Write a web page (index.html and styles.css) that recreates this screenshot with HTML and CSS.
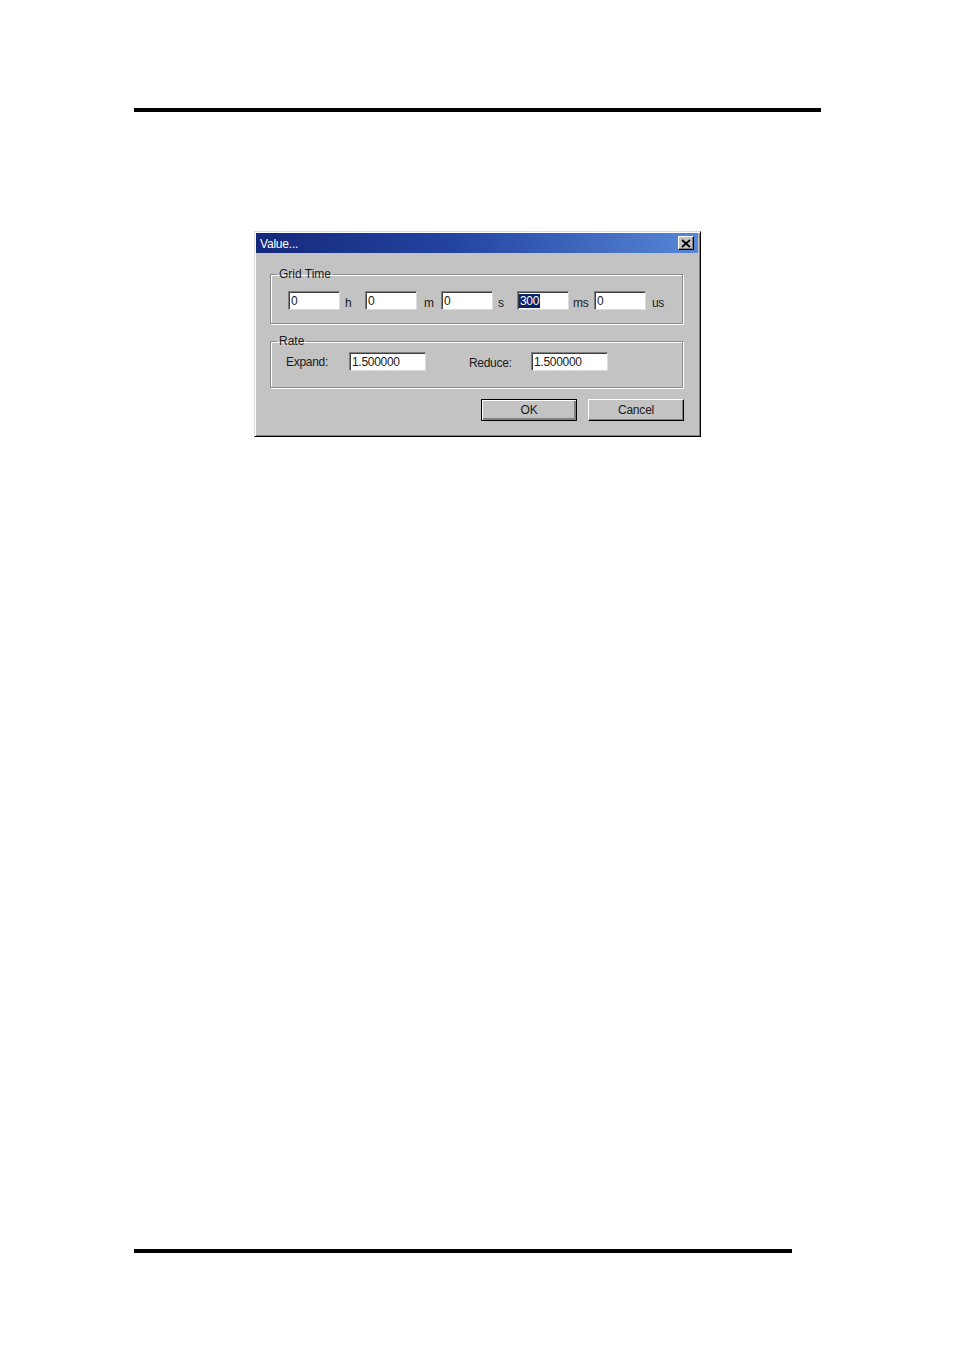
FILE: index.html
```html
<!DOCTYPE html>
<html>
<head>
<meta charset="utf-8">
<link rel="stylesheet" href="styles.css">
</head>
<body>
<div class="page">
  <div class="rule rule-top"></div>
  <div class="dialog">
    <div class="titlebar">
      <span class="title">Value...</span>
      <span class="close"><svg width="10" height="9" viewBox="0 0 10 9"><path d="M1 1 L9 8 M9 1 L1 8" stroke="#000" stroke-width="1.8" fill="none"/></svg></span>
    </div>
    <div class="body">
      <fieldset class="group group-time">
        <legend>Grid Time</legend>
        <div class="row">
          <span class="field w52"><span class="val">0</span></span><span class="unit u-h">h</span>
          <span class="field w52"><span class="val">0</span></span><span class="unit u-m">m</span>
          <span class="field w52"><span class="val">0</span></span><span class="unit u-s">s</span>
          <span class="field w52"><span class="val sel">300</span></span><span class="unit u-ms">ms</span>
          <span class="field w52"><span class="val">0</span></span><span class="unit u-us">us</span>
        </div>
      </fieldset>
      <fieldset class="group group-rate">
        <legend>Rate</legend>
        <div class="row rate-row">
          <span class="lbl lbl-expand">Expand:</span>
          <span class="field w76"><span class="val">1.500000</span></span>
          <span class="lbl lbl-reduce">Reduce:</span>
          <span class="field w76"><span class="val">1.500000</span></span>
        </div>
      </fieldset>
      <div class="buttons">
        <span class="btn btn-default"><span class="btn-in">OK</span></span>
        <span class="btn"><span class="btn-in">Cancel</span></span>
      </div>
    </div>
  </div>
  <div class="spacer"></div>
  <div class="rule rule-bottom"></div>
</div>
</body>
</html>
```
FILE: styles.css
```css
html, body {
  margin: 0;
  padding: 0;
  background: #fff;
}
body {
  font-family: "Liberation Sans", Arial, sans-serif;
  font-size: 12px;
  color: #1a1a1a;
}
.page {
  width: 954px;
  height: 1350px;
  display: flex;
  flex-direction: column;
}
.rule {
  background: #000;
  height: 4px;
  margin-left: 134px;
}
.rule-top {
  margin-top: 108px;
  width: 687px;
}
.rule-bottom {
  width: 658px;
}
.spacer {
  height: 812px;
}
.dialog {
  margin-top: 119px;
  margin-left: 254px;
  width: 447px;
  height: 206px;
  box-sizing: border-box;
  background: #c3c3c3;
  border-top: 1px solid #dcdcdc;
  border-left: 1px solid #dcdcdc;
  border-right: 1px solid #000;
  border-bottom: 1px solid #000;
  box-shadow: inset 1px 1px 0 #fff, inset -1px -1px 0 #808080;
  padding: 1px 2px 2px 1px;
  display: flex;
  flex-direction: column;
}
.titlebar {
  height: 20px;
  background: linear-gradient(to right, #14287a 0%, #2444a2 45%, #5787d6 100%);
  display: flex;
  align-items: center;
  justify-content: space-between;
  padding: 0 4px 0 4px;
}
.title {
  color: #fff;
  font-size: 12px;
  letter-spacing: -0.2px;
  padding-top: 1px;
}
.close {
  width: 16px;
  height: 14px;
  box-sizing: border-box;
  background: #c3c3c3;
  border-top: 1px solid #fff;
  border-left: 1px solid #fff;
  border-right: 1px solid #000;
  border-bottom: 1px solid #000;
  box-shadow: inset -1px -1px 0 #808080;
  display: flex;
  align-items: center;
  justify-content: center;
}
.close svg { display: block; }
.body {
  flex: 1;
  padding: 14px 16px 0 14px;
  display: flex;
  flex-direction: column;
}
.group {
  margin: 0;
  padding: 0;
  border: 1px solid #8a8a8a;
  box-shadow: 1px 1px 0 #fff, inset 1px 1px 0 #fff;
  min-width: 0;
  width: 413px;
  box-sizing: border-box;
}
.group legend {
  padding: 0 2px;
  margin-left: 6px;
  font-size: 12px;
  line-height: 14px;
  color: #1a1a1a;
}
.group-time {
  height: 57px;
}
.group-time .row {
  padding: 9px 0 0 17px;
}
.group-rate {
  margin-top: 10px;
  height: 54px;
}
.group-rate .row {
  padding: 4px 0 0 15px;
}
.row {
  display: flex;
  align-items: center;
}
.field {
  height: 19px;
  box-sizing: border-box;
  background: #fff;
  border-top: 1px solid #808080;
  border-left: 1px solid #808080;
  border-right: 1px solid #dcdcdc;
  border-bottom: 1px solid #dcdcdc;
  box-shadow: inset 1px 1px 0 #404040;
  padding: 1px 0 0 2px;
  display: flex;
  align-items: center;
}
.w52 { width: 52px; }
.w76 { width: 77px; }
.val {
  font-size: 12px;
  line-height: 14px;
  letter-spacing: -0.3px;
}
.val.sel {
  background: #0a246a;
  color: #fff;
  padding: 0 1px;
  margin-left: -1px;
}
.unit {
  box-sizing: border-box;
  padding-top: 6px;
  font-size: 12px;
}
.u-h { width: 25px; padding-left: 5px; }
.u-m { width: 24px; padding-left: 7px; }
.u-s { width: 24px; padding-left: 5px; }
.u-ms { width: 25px; padding-left: 4px; letter-spacing: -0.3px; }
.u-us { width: 24px; padding-left: 6px; letter-spacing: -0.3px; }
.lbl {
  font-size: 12px;
  letter-spacing: -0.3px;
}
.lbl-expand {
  width: 63px;
}
.lbl-reduce {
  width: 62px;
  margin-left: 43px;
  padding-top: 3px;
}
.buttons {
  margin-top: 11px;
  display: flex;
  justify-content: flex-end;
  gap: 11px;
  width: 414px;
}
.btn {
  width: 96px;
  height: 22px;
  box-sizing: border-box;
  background: #c3c3c3;
  border-top: 1px solid #fff;
  border-left: 1px solid #fff;
  border-right: 1px solid #000;
  border-bottom: 1px solid #000;
  box-shadow: inset -1px -1px 0 #808080;
  display: flex;
  align-items: center;
  justify-content: center;
}
.btn-default {
  border: 1px solid #000;
  box-shadow: inset 1px 1px 0 #fff, inset -2px -2px 0 #808080;
}
.btn-in {
  font-size: 12px;
  letter-spacing: -0.2px;
}
```
